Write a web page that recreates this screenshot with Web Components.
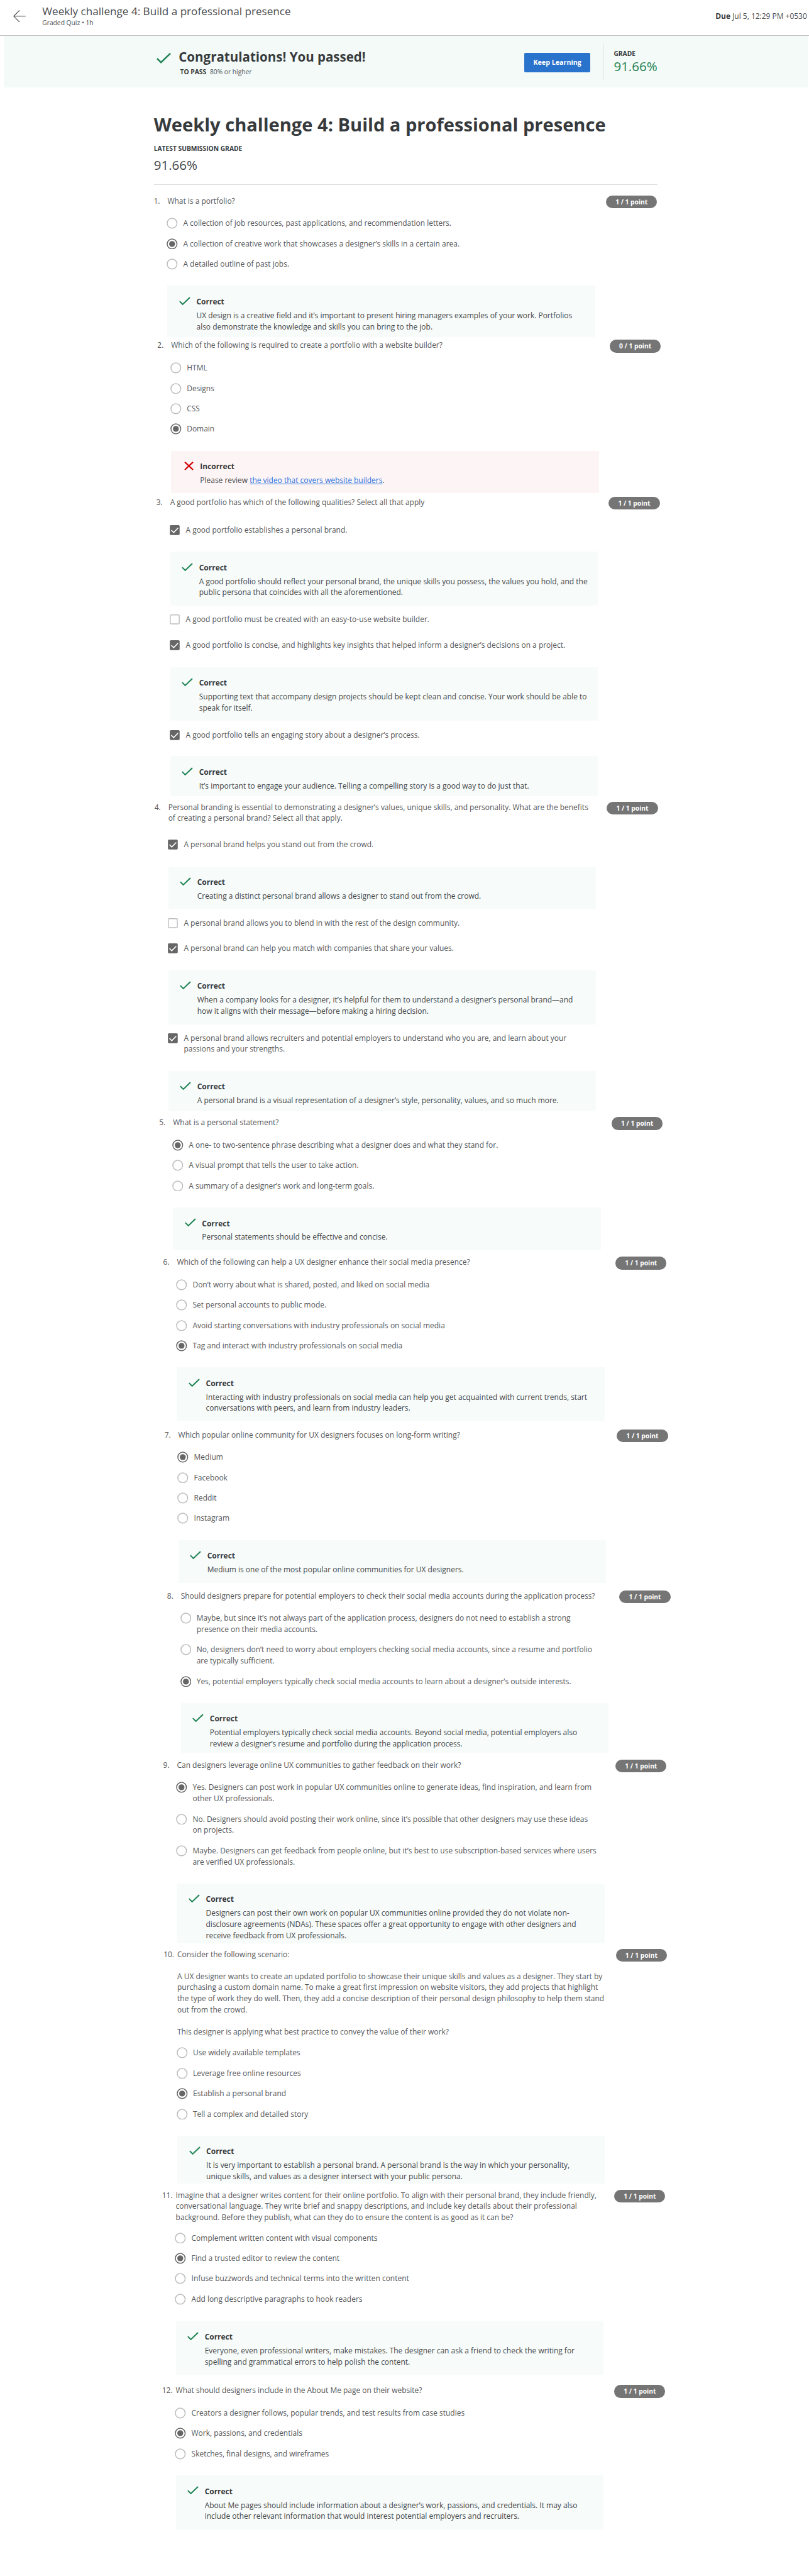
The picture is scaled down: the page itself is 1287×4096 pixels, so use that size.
<!DOCTYPE html>
<html lang="en">
<head>
<meta charset="utf-8">
<title>Weekly challenge 4: Build a professional presence</title>
<style>
/* 1rem = 100 design pixels */
html{font-size:68.4574px;background:#fff}
body{margin:0;font-family:"Open Sans","Noto Sans",sans-serif;font-size:.175rem;line-height:.26rem;color:#555759;overflow-x:hidden}
a{color:#1f70de;text-decoration:underline}
</style>
</head>
<body>
<quiz-header due="Jul 5, 12:29 PM +0530"><span slot="title">Weekly challenge 4: Build a professional presence</span><span slot="sub">Graded Quiz • 1h</span></quiz-header>
<pass-banner grade="91.66%"><span slot="title">Congratulations! You passed!</span><span slot="need">80% or higher</span></pass-banner>
<quiz-summary grade="91.66%">Weekly challenge 4: Build a professional presence</quiz-summary>

<quiz-question n="1." style="--x:3.892rem;--h:3.358rem"><span slot="prompt">What is a portfolio?</span>
<quiz-option>A collection of job resources, past applications, and recommendation letters.</quiz-option>
<quiz-option checked>A collection of creative work that showcases a designer’s skills in a certain area.</quiz-option>
<quiz-option>A detailed outline of past jobs.</quiz-option>
<quiz-feedback style="--h:1.198rem">UX design is a creative field and it’s important to present hiring managers examples of your work. Portfolios<br>also demonstrate the knowledge and skills you can bring to the job.</quiz-feedback>
</quiz-question>

<quiz-question n="2." points="0 / 1 point" style="--x:3.977rem;--h:3.645rem"><span slot="prompt">Which of the following is required to create a portfolio with a website builder?</span>
<quiz-option>HTML</quiz-option>
<quiz-option>Designs</quiz-option>
<quiz-option>CSS</quiz-option>
<quiz-option checked>Domain</quiz-option>
<quiz-feedback wrong style="--h:.99rem">Please review <a>the video that covers website builders</a>.</quiz-feedback>
</quiz-question>

<quiz-question n="3." style="--x:3.954rem;--h:7.079rem"><span slot="prompt">A good portfolio has which of the following qualities? Select all that apply</span>
<quiz-option box checked style="--gap:.383rem">A good portfolio establishes a personal brand.</quiz-option>
<quiz-feedback style="--h:1.26rem;--gap:.372rem">A good portfolio should reflect your personal brand, the unique skills you possess, the values you hold, and the<br>public persona that coincides with all the aforementioned.</quiz-feedback>
<quiz-option box style="--gap:.183rem">A good portfolio must be created with an easy-to-use website builder.</quiz-option>
<quiz-option box checked style="--gap:.337rem">A good portfolio is concise, and highlights key insights that helped inform a designer’s decisions on a project.</quiz-option>
<quiz-feedback style="--h:1.25rem;--gap:.378rem">Supporting text that accompany design projects should be kept clean and concise. Your work should be able to<br>speak for itself.</quiz-feedback>
<quiz-option box checked style="--gap:.197rem">A good portfolio tells an engaging story about a designer’s process.</quiz-option>
<quiz-feedback style="--h:.935rem;--gap:.365rem">It’s important to engage your audience. Telling a compelling story is a good way to do just that.</quiz-feedback>
</quiz-question>

<quiz-question n="4." style="--x:3.91rem;--h:7.329rem"><span slot="prompt">Personal branding is essential to demonstrating a designer’s values, unique skills, and personality. What are the benefits<br>of creating a personal brand? Select all that apply.</span>
<quiz-option box checked style="--gap:.348rem">A personal brand helps you stand out from the crowd.</quiz-option>
<quiz-feedback style="--h:.99rem;--gap:.378rem">Creating a distinct personal brand allows a designer to stand out from the crowd.</quiz-feedback>
<quiz-option box style="--gap:.193rem">A personal brand allows you to blend in with the rest of the design community.</quiz-option>
<quiz-option box checked style="--gap:.337rem">A personal brand can help you match with companies that share your values.</quiz-option>
<quiz-feedback style="--h:1.257rem;--gap:.371rem">When a company looks for a designer, it’s helpful for them to understand a designer’s personal brand—and<br>how it aligns with their message—before making a hiring decision.</quiz-feedback>
<quiz-option box checked style="--gap:.187rem">A personal brand allows recruiters and potential employers to understand who you are, and learn about your<br>passions and your strengths.</quiz-option>
<quiz-feedback style="--h:.94rem;--gap:.375rem">A personal brand is a visual representation of a designer’s style, personality, values, and so much more.</quiz-feedback>
</quiz-question>

<quiz-question n="5." style="--x:4.021rem;--h:3.241rem"><span slot="prompt">What is a personal statement?</span>
<quiz-option checked>A one- to two-sentence phrase describing what a designer does and what they stand for.</quiz-option>
<quiz-option>A visual prompt that tells the user to take action.</quiz-option>
<quiz-option>A summary of a designer’s work and long-term goals.</quiz-option>
<quiz-feedback style="--h:.979rem">Personal statements should be effective and concise.</quiz-feedback>
</quiz-question>

<quiz-question n="6." style="--x:4.112rem;--h:4.009rem"><span slot="prompt">Which of the following can help a UX designer enhance their social media presence?</span>
<quiz-option>Don’t worry about what is shared, posted, and liked on social media</quiz-option>
<quiz-option>Set personal accounts to public mode.</quiz-option>
<quiz-option>Avoid starting conversations with industry professionals on social media</quiz-option>
<quiz-option checked>Tag and interact with industry professionals on social media</quiz-option>
<quiz-feedback style="--h:1.246rem">Interacting with industry professionals on social media can help you get acquainted with current trends, start<br>conversations with peers, and learn from industry leaders.</quiz-feedback>
</quiz-question>

<quiz-question n="7." style="--x:4.143rem;--h:3.74rem"><span slot="prompt">Which popular online community for UX designers focuses on long-form writing?</span>
<quiz-option checked>Medium</quiz-option>
<quiz-option>Facebook</quiz-option>
<quiz-option>Reddit</quiz-option>
<quiz-option>Instagram</quiz-option>
<quiz-feedback style="--h:1rem">Medium is one of the most popular online communities for UX designers.</quiz-feedback>
</quiz-question>

<quiz-question n="8." style="--x:4.203rem;--h:3.932rem"><span slot="prompt">Should designers prepare for potential employers to check their social media accounts during the application process?</span>
<quiz-option>Maybe, but since it’s not always part of the application process, designers do not need to establish a strong<br>presence on their media accounts.</quiz-option>
<quiz-option>No, designers don’t need to worry about employers checking social media accounts, since a resume and portfolio<br>are typically sufficient.</quiz-option>
<quiz-option checked>Yes, potential employers typically check social media accounts to learn about a designer’s outside interests.</quiz-option>
<quiz-feedback style="--h:1.16rem">Potential employers typically check social media accounts. Beyond social media, potential employers also<br>review a designer’s resume and portfolio during the application process.</quiz-feedback>
</quiz-question>

<quiz-question n="9." style="--x:4.112rem;--h:4.396rem"><span slot="prompt">Can designers leverage online UX communities to gather feedback on their work?</span>
<quiz-option checked>Yes. Designers can post work in popular UX communities online to generate ideas, find inspiration, and learn from<br>other UX professionals.</quiz-option>
<quiz-option>No. Designers should avoid posting their work online, since it’s possible that other designers may use these ideas<br>on projects.</quiz-option>
<quiz-option>Maybe. Designers can get feedback from people online, but it’s best to use subscription-based services where users<br>are verified UX professionals.</quiz-option>
<quiz-feedback style="--h:1.389rem">Designers can post their own work on popular UX communities online provided they do not violate non-<br>disclosure agreements (NDAs). These spaces offer a great opportunity to engage with other designers and<br>receive feedback from UX professionals.</quiz-feedback>
</quiz-question>

<quiz-question n="10." style="--x:4.12rem;--h:5.592rem"><span slot="prompt">Consider the following scenario:</span>
<quiz-text>A UX designer wants to create an updated portfolio to showcase their unique skills and values as a designer. They start by<br>purchasing a custom domain name. To make a great first impression on website visitors, they add projects that highlight<br>the type of work they do well. Then, they add a concise description of their personal design philosophy to help them stand<br>out from the crowd.</quiz-text>
<quiz-text>This designer is applying what best practice to convey the value of their work?</quiz-text>
<quiz-option style="--gap:.233rem">Use widely available templates</quiz-option>
<quiz-option>Leverage free online resources</quiz-option>
<quiz-option checked>Establish a personal brand</quiz-option>
<quiz-option>Tell a complex and detailed story</quiz-option>
<quiz-feedback style="--h:1.111rem">It is very important to establish a personal brand. A personal brand is the way in which your personality,<br>unique skills, and values as a designer intersect with your public persona.</quiz-feedback>
</quiz-question>

<quiz-question n="11." style="--x:4.084rem;--h:4.541rem"><span slot="prompt">Imagine that a designer writes content for their online portfolio. To align with their personal brand, they include friendly,<br>conversational language. They write brief and snappy descriptions, and include key details about their professional<br>background. Before they publish, what can they do to ensure the content is as good as it can be?</span>
<quiz-option style="--gap:.216rem">Complement written content with visual components</quiz-option>
<quiz-option checked>Find a trusted editor to review the content</quiz-option>
<quiz-option>Infuse buzzwords and technical terms into the written content</quiz-option>
<quiz-option>Add long descriptive paragraphs to hook readers</quiz-option>
<quiz-feedback style="--h:1.248rem;--gap:.38rem">Everyone, even professional writers, make mistakes. The designer can ask a friend to check the writing for<br>spelling and grammatical errors to help polish the content.</quiz-feedback>
</quiz-question>

<quiz-question n="12." style="--x:4.084rem;--h:4.445rem"><span slot="prompt">What should designers include in the About Me page on their website?</span>
<quiz-option>Creators a designer follows, popular trends, and test results from case studies</quiz-option>
<quiz-option checked>Work, passions, and credentials</quiz-option>
<quiz-option>Sketches, final designs, and wireframes</quiz-option>
<quiz-feedback style="--h:1.248rem">About Me pages should include information about a designer’s work, passions, and credentials. It may also<br>include other relevant information that would interest potential employers and recruiters.</quiz-feedback>
</quiz-question>

<script>
const define = (name, render) => customElements.define(name, class extends HTMLElement {
  constructor() { super(); this.attachShadow({ mode: 'open' }); }
  connectedCallback() { this.shadowRoot.innerHTML = render(this); }
});
const TICK = '<svg viewBox="0 0 26 20" fill="none"><path d="M1.2 10.4 8.2 17.4 24.8 1.3" stroke="#1d8253" stroke-width="3"/></svg>';
const CROSS = '<svg viewBox="0 0 22 20" fill="none"><path d="M1.5 1 20.5 19M20.5 1 1.5 19" stroke="#d30001" stroke-width="3.2"/></svg>';

define('quiz-header', el => `<style>
:host{display:flex;border-bottom:1px solid #c2c2c2;box-sizing:border-box;height:.833rem;padding:0 .047rem 0 .312rem;white-space:nowrap;color:#494c4e}
svg{width:.288rem;height:.287rem;margin-top:.23rem;flex:none}
.t{margin:.105rem auto 0 .383rem;display:flex;flex-direction:column;gap:.012rem}
.a{font-size:.25rem;line-height:.32rem}.b{font-size:.15rem;line-height:.2rem}
.d{margin-top:.247rem}b{color:#373a3c}
</style><svg viewBox="0 0 28.8 28.7" fill="none" stroke="#444" stroke-width="1.6"><path d="M14.8.6 1.2 14.35 14.8 28.1M1.2 14.35H28.8"/></svg>
<div class="t"><div class="a"><slot name="title"></slot></div><div class="b"><slot name="sub"></slot></div></div>
<div class="d"><b>Due</b> ${el.getAttribute('due')}</div>`);

define('pass-banner', el => `<style>
:host{display:flex;align-items:flex-start;height:1.194rem;margin:0 .035rem 0 .084rem;padding-left:3.549rem;background:#f3faf8;white-space:nowrap;box-sizing:border-box;color:#373a3c}
svg{width:.336rem;height:.25rem;margin-top:.387rem;flex:none}
.t{width:8.037rem;margin:.29rem 0 0 .184rem;flex:none}
.a{font-size:.3rem;line-height:.4rem;font-weight:700}
.b{font-size:.15rem;line-height:.2rem;margin:.062rem 0 0 .033rem;display:flex;gap:.085rem;color:#505356}
.b b{color:#373a3c}
button{width:1.523rem;height:.45rem;margin:.397rem 0 0;border:0;border-radius:.03rem;background:#2a73cc;color:#fff;font:700 .1565rem/.45rem "Open Sans",sans-serif;padding:0;flex:none}
i{width:1px;height:.847rem;margin:.177rem .238rem 0 .298rem;background:#dbe1df;flex:none}
.g{margin-top:.314rem;display:flex;flex-direction:column;gap:.012rem}
.g b{font-size:.15rem;line-height:.2rem}.g span{font-size:.3rem;line-height:.36rem;color:#1d8253}
</style><svg viewBox="0 0 34 25" fill="none"><path d="M1.4 13.2 10.6 22.4 32.6 1.3" stroke="#1d8253" stroke-width="3.6"/></svg>
<div class="t"><div class="a"><slot name="title"></slot></div><div class="b"><b>TO PASS</b><slot name="need"></slot></div></div>
<button>Keep Learning</button><i></i><div class="g"><b>GRADE</b><span>${el.getAttribute('grade')}</span></div>`);

define('quiz-summary', el => `<style>
:host{display:block;height:2.51rem;box-sizing:border-box;padding:.587rem 0 0 3.575rem;white-space:nowrap;color:#373a3c}
h1{margin:0;font-size:.425rem;line-height:.56rem;font-weight:700}
b{display:block;font-size:.15rem;line-height:.2rem;margin-top:.193rem}
div{font-size:.3rem;line-height:.4rem;margin-top:.069rem;color:#44474a}
hr{margin:.25rem 0 0 .01rem;width:11.69rem;height:1px;border:0;background:#dedede}
</style><h1><slot></slot></h1><b>LATEST SUBMISSION GRADE</b><div>${el.getAttribute('grade')}</div><hr>`);

define('quiz-question', el => `<style>
:host{display:flex;height:var(--h);padding-left:calc(var(--x) - .32rem);box-sizing:border-box;white-space:nowrap}
.n{width:.32rem;flex:none}
.c{width:9.938rem;flex:none;display:flex;flex-direction:column}
.p{width:1.186rem;height:.3rem;margin-left:.254rem;border-radius:.15rem;background:#757575;color:#fff;font-size:.15rem;line-height:.315rem;font-weight:700;text-align:center;flex:none}
</style><div class="n">${el.getAttribute('n')}</div><div class="c"><div><slot name="prompt"></slot></div><slot></slot></div>
<div class="p">${el.getAttribute('points') || '1 / 1 point'}</div>`);

define('quiz-text', () => `<style>:host{display:block;margin-top:.249rem}</style><slot></slot>`);

define('quiz-option', el => {
  const on = el.hasAttribute('checked');
  const mark = el.hasAttribute('box')
    ? (on ? '<svg viewBox="0 0 26 26"><rect x="1.7" y="1.5" width="22.8" height="23" rx="2.5" fill="#666"/><path d="M5.2 13.2 10.6 18.6 21 8" fill="none" stroke="#fff" stroke-width="2.4"/></svg>'
          : '<svg viewBox="0 0 26 26"><rect x="2.8" y="2.6" width="20.8" height="20.8" rx="1.5" fill="#fff" stroke="#bdbdbd" stroke-width="2"/></svg>')
    : `<svg viewBox="0 0 26 26"><circle cx="12.8" cy="13" r="11.4" fill="#fff" stroke="${on ? '#666' : '#bdbdbd'}" stroke-width="2.2"/>${on ? '<circle cx="12.8" cy="13" r="6.9" fill="#666"/>' : ''}</svg>`;
  return `<style>:host{display:flex;margin-top:var(--gap,.2125rem);margin-left:${el.hasAttribute('box') ? '-.02rem' : '-.017rem'}}
:host(:nth-child(2)){margin-top:var(--gap,.262rem)}
svg{width:.26rem;height:.26rem;margin-right:.122rem;flex:none}</style>${mark}<div><slot></slot></div>`;
});

define('quiz-feedback', el => {
  const bad = el.hasAttribute('wrong');
  return `<style>:host{display:flex;height:var(--h);margin-top:var(--gap,.373rem);background:${bad ? '#fdf5f5' : '#f7fbfa'};color:#434648;box-sizing:border-box;padding:.241rem 0 0 ${bad ? '.3rem' : '.273rem'}}
svg{width:${bad ? '.22rem' : '.26rem'};height:.2rem;margin:.012rem ${bad ? '.153rem' : '.14rem'} 0 0;flex:none}
b{display:block;margin-bottom:.061rem;color:#373a3c}</style>${bad ? CROSS : TICK}<div><b>${bad ? 'Incorrect' : 'Correct'}</b><slot></slot></div>`;
});
</script>
</body>
</html>
